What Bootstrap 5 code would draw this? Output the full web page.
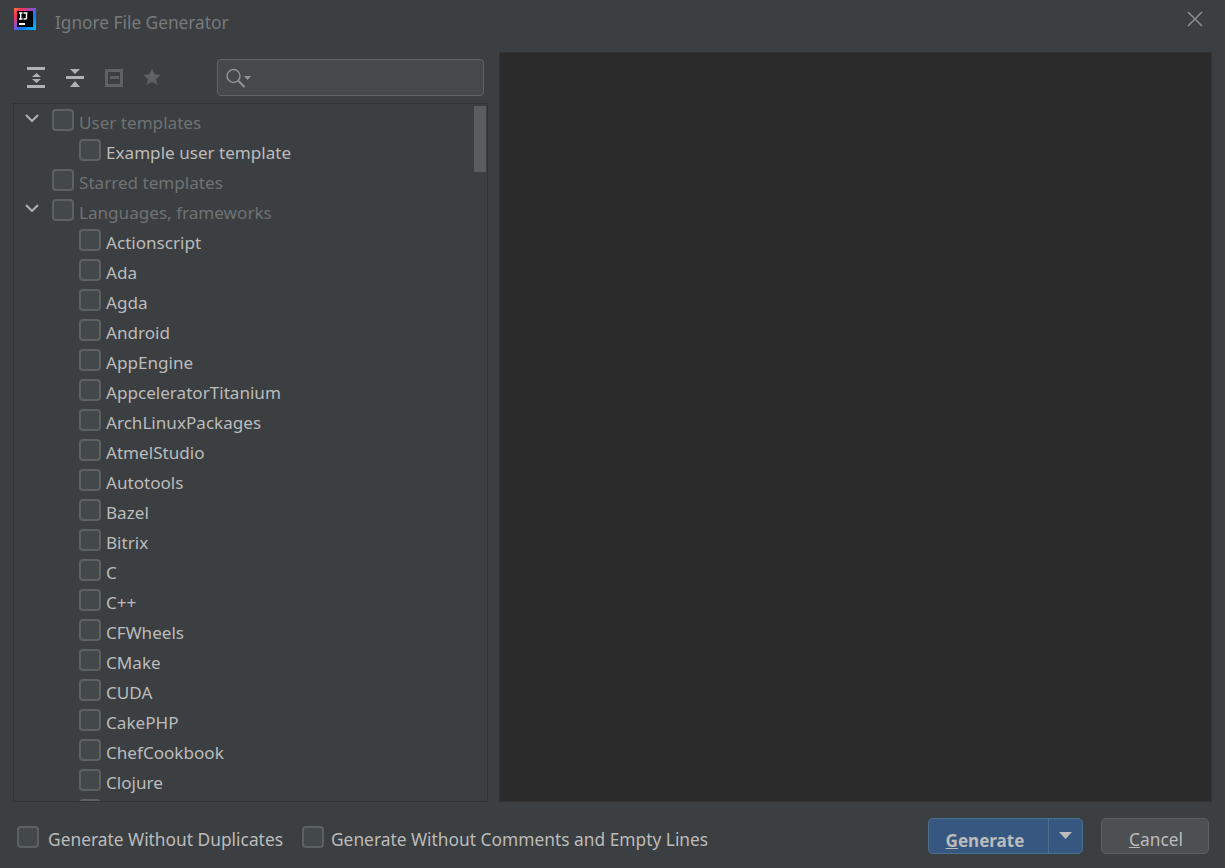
<!DOCTYPE html>
<html lang="en">
<head>
<meta charset="utf-8">
<title>Ignore File Generator</title>
<link href="https://cdn.jsdelivr.net/npm/bootstrap@5.3.0/dist/css/bootstrap.min.css" rel="stylesheet">
<style>
html,body{height:100%;}
body{background:#3c3f41;color:#bbbbbb;font-family:"Noto Sans","Open Sans",sans-serif;font-size:17.1px;overflow:hidden;}
.dlg{width:1225px;height:868px;}
.titlebar{height:38px;padding:0 22px 0 14px;}
.titlebar .ttl{color:#787a7c;margin-left:19px;font-size:17.25px;position:relative;top:4px;}
.mainarea{height:750px;margin-top:14px;padding:0 13px;gap:11px;}
.leftcol{width:475px;}
.tools{height:51px;padding:0 4px 0 14px;}
.tool{width:18px;height:23px;margin-right:21px;display:block;flex-shrink:0;}
.tool-star{margin-left:-1px;}
.searchbox{width:267px;height:37px;margin-left:auto;background:#45494a;border:1px solid #646464;border-radius:4px;padding-left:8px;}
.tree{position:relative;height:699px;border:1px solid #323232;overflow:hidden;}
.trow{height:30px;display:flex;align-items:flex-start;padding-top:5px;flex-shrink:0;}
.lvl0{padding-left:38px;}
.lvl1{padding-left:65px;}
.ck{width:22px;height:22px;background:#43494a;border:2px solid #5d6162;border-radius:4px;flex-shrink:0;display:block;}
.lbl{margin-left:5px;line-height:24px;position:relative;top:2px;white-space:nowrap;color:#bbbbbb;}
.lbl.dim{color:#6f7274;}
.chev{position:absolute;left:11px;width:14px;height:8px;}
.chev1{top:10px;}
.chev2{top:100px;}
.thumb{position:absolute;left:460px;top:2px;width:12px;height:66px;background:#5a5c5e;}
.preview{width:713px;background:#2b2b2b;border:1px solid #323232;}
.foot{height:66px;padding:2px 16px 0 17px;font-size:17.35px;}
.optgrp{margin-right:19px;padding-top:2px;}
.optgrp .lbl{margin-left:9px;top:2px;}
.optgrp .lbl.tight{margin-left:7px;}
.btn-gen{display:flex;width:155px;height:36px;background:#365880;border:1px solid #4c708c;border-radius:5px;color:#bbbbbb;font-weight:700;font-size:17.05px;margin-right:18px;padding:0;}
.btn-gen .main{width:120px;border-right:1px solid #4c708c;line-height:43px;text-align:center;padding-right:7px;}
.btn-gen .drop{flex:1;display:flex;justify-content:center;padding-top:13px;}
.btn-can{width:108px;height:36px;background:#4c5052;border:1px solid #5e6060;border-radius:5px;color:#bbbbbb;text-align:center;padding:7px 0 0 2px;font-size:17.35px;}
.btn-gen:hover,.btn-can:hover{color:#bbbbbb;}
</style>
</head>
<body>
<div class="dlg d-flex flex-column">
  <div class="titlebar d-flex align-items-center">
    <svg width="22" height="22" viewBox="0 0 22 22">
      <defs><linearGradient id="lg" x1="0" y1="0" x2="1" y2="1"><stop offset="0" stop-color="#fe7a3d"/><stop offset=".2" stop-color="#fe315d"/><stop offset=".45" stop-color="#8a4fd0"/><stop offset=".65" stop-color="#087cfa"/><stop offset="1" stop-color="#07c3f2"/></linearGradient></defs>
      <rect width="22" height="22" fill="url(#lg)"/><rect x="3" y="3" width="16" height="16" fill="#000"/>
      <path d="M5 5h3.500M6.700 5v6M5 11h3.500M9.500 5h4M12.500 5v5q0 1-1 1h-2" stroke="#fff" stroke-width="1.400" fill="none"/>
      <rect x="5" y="15" width="6" height="2" fill="#fff"/>
    </svg>
    <span class="ttl">Ignore File Generator</span>
    <svg class="ms-auto" width="16" height="16" viewBox="0 0 16 16"><path d="M1 1 15 15M15 1 1 15" stroke="#8c8e90" stroke-width="1.500"/></svg>
  </div>
  <div class="mainarea d-flex">
    <div class="leftcol d-flex flex-column">
      <div class="tools d-flex align-items-center">
        <svg class="tool" viewBox="0 0 18 23"><path d="M0 1h18v3H0zM0 19h18v3H0z" fill="#afb1b3"/><path d="M9.500 7l4.500 4H5zM9.500 17L5 13h9z" fill="#afb1b3"/></svg>
        <svg class="tool" viewBox="0 0 18 23"><path d="M0 10h18v3H0zM4 3h10L9 8zM9 15l5 6H4z" fill="#afb1b3"/></svg>
        <svg class="tool" viewBox="0 0 18 23"><path d="M1.500 4.500h15v15h-15z" fill="none" stroke="#5f6264" stroke-width="3"/><path d="M5 10h9v3H5z" fill="#5f6264"/></svg>
        <svg class="tool tool-star" viewBox="0 0 18 23"><path d="M9 2.500l2.600 5.800 6 .6-4.600 4 1.400 6.100L9 15.800 3.600 19l1.400-6.100-4.600-4 6-.6z" fill="#5f6264"/></svg>
        <div class="searchbox d-flex align-items-center">
          <svg width="26" height="22" viewBox="0 0 26 22"><circle cx="7.500" cy="9" r="6.500" fill="none" stroke="#909496" stroke-width="1.400"/><path d="M12.500 14l6 6" stroke="#909496" stroke-width="2"/><path d="M18 9h7l-3.500 4z" fill="#909496"/></svg>
        </div>
      </div>
      <div class="tree">
        <svg class="chev chev1" viewBox="0 0 14 8"><path d="M1 1l6 6 6-6" fill="none" stroke="#afb1b3" stroke-width="2"/></svg>
        <svg class="chev chev2" viewBox="0 0 14 8"><path d="M1 1l6 6 6-6" fill="none" stroke="#afb1b3" stroke-width="2"/></svg>
        <div class="thumb"></div>
        <div class="trow lvl0"><span class="ck"></span><span class="lbl dim">User templates</span></div>
        <div class="trow lvl1"><span class="ck"></span><span class="lbl">Example user template</span></div>
        <div class="trow lvl0"><span class="ck"></span><span class="lbl dim">Starred templates</span></div>
        <div class="trow lvl0"><span class="ck"></span><span class="lbl dim">Languages, frameworks</span></div>
        <div class="trow lvl1"><span class="ck"></span><span class="lbl">Actionscript</span></div>
        <div class="trow lvl1"><span class="ck"></span><span class="lbl">Ada</span></div>
        <div class="trow lvl1"><span class="ck"></span><span class="lbl">Agda</span></div>
        <div class="trow lvl1"><span class="ck"></span><span class="lbl">Android</span></div>
        <div class="trow lvl1"><span class="ck"></span><span class="lbl">AppEngine</span></div>
        <div class="trow lvl1"><span class="ck"></span><span class="lbl">AppceleratorTitanium</span></div>
        <div class="trow lvl1"><span class="ck"></span><span class="lbl">ArchLinuxPackages</span></div>
        <div class="trow lvl1"><span class="ck"></span><span class="lbl">AtmelStudio</span></div>
        <div class="trow lvl1"><span class="ck"></span><span class="lbl">Autotools</span></div>
        <div class="trow lvl1"><span class="ck"></span><span class="lbl">Bazel</span></div>
        <div class="trow lvl1"><span class="ck"></span><span class="lbl">Bitrix</span></div>
        <div class="trow lvl1"><span class="ck"></span><span class="lbl">C</span></div>
        <div class="trow lvl1"><span class="ck"></span><span class="lbl">C++</span></div>
        <div class="trow lvl1"><span class="ck"></span><span class="lbl">CFWheels</span></div>
        <div class="trow lvl1"><span class="ck"></span><span class="lbl">CMake</span></div>
        <div class="trow lvl1"><span class="ck"></span><span class="lbl">CUDA</span></div>
        <div class="trow lvl1"><span class="ck"></span><span class="lbl">CakePHP</span></div>
        <div class="trow lvl1"><span class="ck"></span><span class="lbl">ChefCookbook</span></div>
        <div class="trow lvl1"><span class="ck"></span><span class="lbl">Clojure</span></div>
        <div class="trow lvl1"><span class="ck"></span></div>
      </div>
    </div>
    <div class="preview"></div>
  </div>
  <div class="foot d-flex align-items-center">
    <div class="optgrp d-flex align-items-center"><span class="ck"></span><span class="lbl">Generate Without Duplicates</span></div>
    <div class="optgrp d-flex align-items-center"><span class="ck"></span><span class="lbl tight">Generate Without Comments and Empty Lines</span></div>
    <button type="button" class="btn btn-gen ms-auto"><span class="main"><u>G</u>enerate</span><span class="drop"><svg width="13" height="7" viewBox="0 0 13 7"><path d="M0 0h13L6.500 7z" fill="#bbbbbb"/></svg></span></button>
    <button type="button" class="btn btn-can"><u>C</u>ancel</button>
  </div>
</div>
<script src="https://cdn.jsdelivr.net/npm/bootstrap@5.3.0/dist/js/bootstrap.bundle.min.js"></script>
</body>
</html>
